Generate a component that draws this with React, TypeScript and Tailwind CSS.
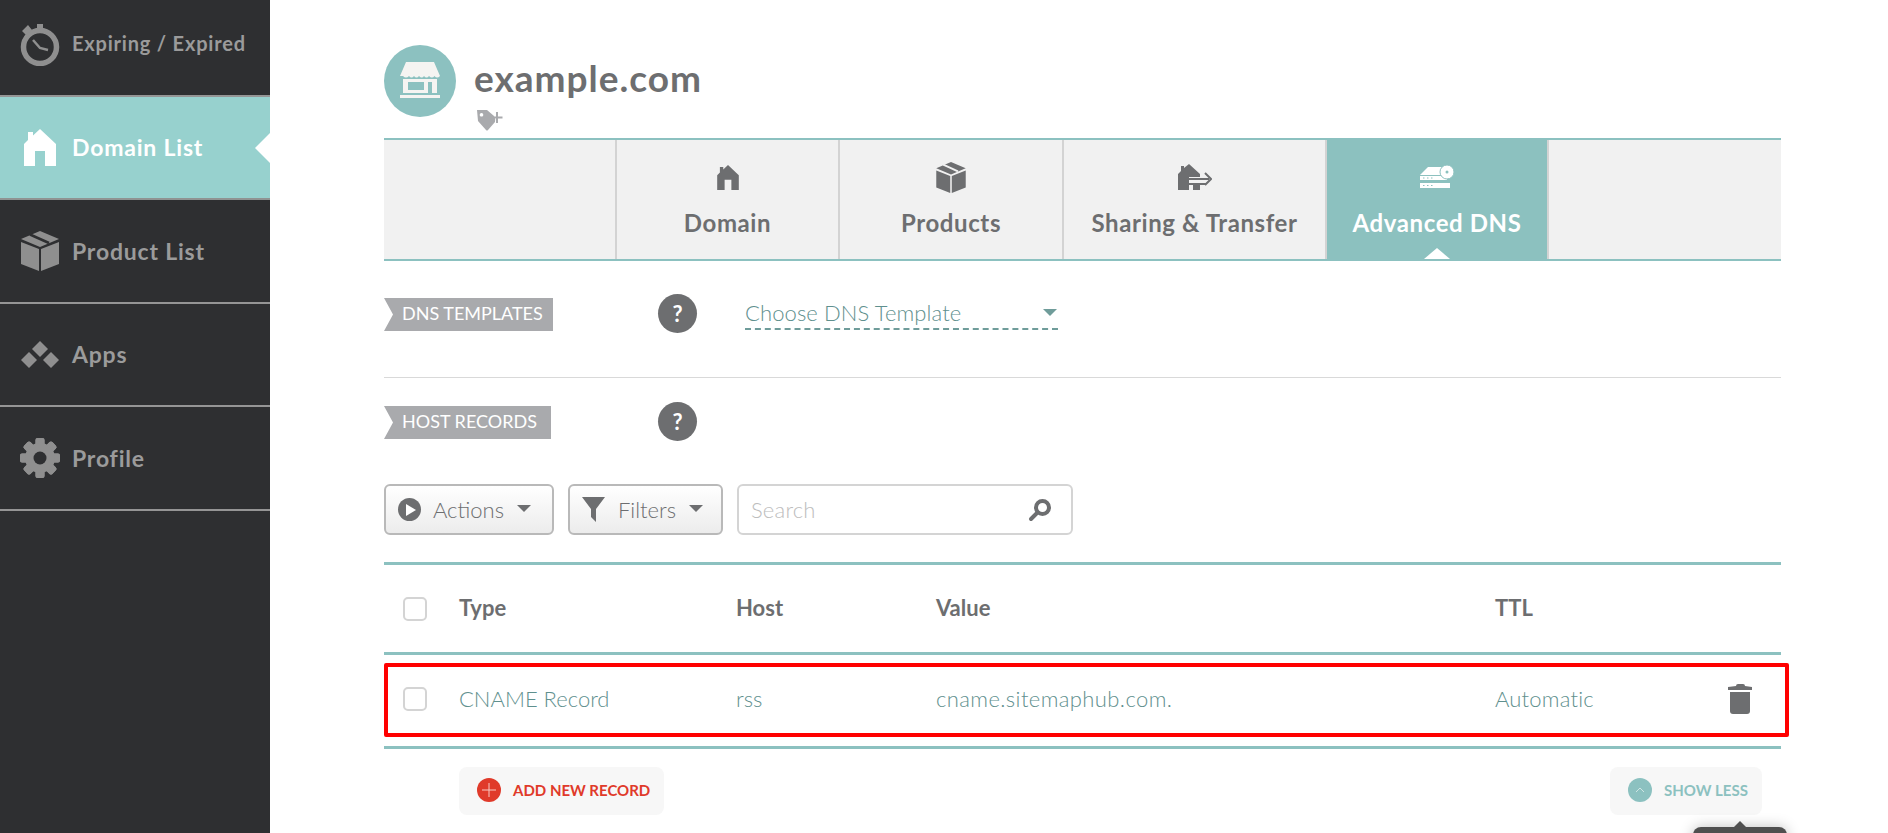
const font = { fontFamily: "Lato, 'Noto Sans', sans-serif" };

function House({ className }: { className?: string }) {
  return (
    <svg viewBox="0 0 32 37" className={className} fill="currentColor">
      <path d="M16 0 L32 15 V37 H21 V22 H11 V37 H0 V15 L4 11 V3 H9 V6.5 Z" />
    </svg>
  );
}
function Box({ className, gap = "#2e2f31" }: { className?: string; gap?: string }) {
  return (
    <svg viewBox="0 0 38 40" className={className} fill="currentColor">
      <path d="M0 11 L18 18 V40 L0 33 Z M20 18 L38 11 V33 L20 40 Z" />
      <path d="M19 0 L38 8 L19 16 L0 8 Z" />
      <path d="M9 3.500 L28 12" stroke={gap} strokeWidth="2.500" fill="none" />
    </svg>
  );
}
function Clock() {
  return (
    <svg viewBox="0 0 40 42" className="w-[40px] h-[42px]" fill="none" stroke="#8f8f8f">
      <circle cx="20" cy="23" r="16.500" strokeWidth="5.500" />
      <path d="M17 0 h6 v6 h-6 Z M2 7 L8 1 L12 6 L6 11 Z" fill="#8f8f8f" stroke="none" />
      <path d="M13 16 L20 24 L28 26" strokeWidth="2.500" />
    </svg>
  );
}
function Diamonds() {
  return (
    <svg viewBox="0 0 38 28" className="w-[38px] h-[28px]" fill="#8f8f8f">
      <path d="M19 0 L27 8 L19 16 L11 8 Z M8 11 L16 19 L8 27 L0 19 Z M30 11 L38 19 L30 27 L22 19 Z" />
    </svg>
  );
}
function Gear() {
  const teeth = [0, 45, 90, 135, 180, 225, 270, 315];
  return (
    <svg viewBox="0 0 40 40" className="w-[40px] h-[40px]" fill="#8f8f8f">
      {teeth.map((a) => (
        <rect key={a} x="15.500" y="0" width="9" height="40" rx="2" transform={`rotate(${a} 20 20)`} />
      ))}
      <circle cx="20" cy="20" r="15" />
      <circle cx="20" cy="20" r="6.500" fill="#2e2f31" />
    </svg>
  );
}
function Store() {
  return (
    <svg viewBox="0 0 40 38" className="w-[40px] h-[38px]" fill="#f5f4f2">
      <path d="M6 0 H34 L40 14 Q37 17 34.500 14 Q32 17 29 14 Q26.500 17 24 14 Q22 17 19 14 Q16.500 17 14 14 Q11.500 17 9 14 Q6 17 3 14 H0 Z" />
      <path fillRule="evenodd" d="M3 17 H37 V31 H3 Z M8 20 V28 H24 V20 Z M28 20 V31 H32 V20 Z" />
      <rect x="0" y="33" width="40" height="3" />
    </svg>
  );
}
function Tag() {
  return (
    <svg viewBox="0 0 26 21" className="w-[26px] h-[21px]">
      <path fillRule="evenodd" fill="#a9aaad" d="M0 0 H10 L17 6 Q19 9 18 12 L11 20 Q10 21 9 20 L1 11 Z M4.500 3 a1.800 1.800 0 1 0 0.010 0 Z" />
      <path d="M20 2 V13 M14.500 7.500 H25.500" stroke="#a9aaad" strokeWidth="2" />
    </svg>
  );
}
function Caret({ color = "#6d6e70" }: { color?: string }) {
  return (
    <svg viewBox="0 0 14 7" className="w-[14px] h-[7px]" fill={color}>
      <path d="M0 0 H14 L7 7 Z" />
    </svg>
  );
}
function HelpDot() {
  return (
    <div className="w-[39px] h-[39px] rounded-full bg-[#6d6e70] text-white flex items-center justify-center text-[22px] font-bold leading-none">
      ?
    </div>
  );
}
function Ribbon({ label, width }: { label: string; width: string }) {
  return (
    <div
      className={`${width} h-[33px] bg-[#a9aaad] text-white text-[18px] leading-[31px] pl-[18px] font-normal [clip-path:polygon(0_0,100%_0,100%_100%,0_100%,9px_50%)]`}
    >
      {label}
    </div>
  );
}
function Checkbox() {
  return <div className="w-[24px] h-[24px] rounded-[5px] border-2 border-[#d4d4d4] bg-white ml-[19px]" />;
}

function NavItem({
  label,
  icon,
  active,
  textClass,
  heightClass,
}: {
  label: string;
  icon: React.ReactNode;
  active?: boolean;
  textClass: string;
  heightClass: string;
}) {
  return (
    <div
      className={
        active
          ? `relative ${heightClass} bg-[#97d1ce] text-white border-b-2 border-[#8f9392] flex items-center`
          : `${heightClass} text-[#9b9b9b] border-b-2 border-[#959595] flex items-center`
      }
    >
      <div className="w-[72px] flex justify-end pr-[12px] shrink-0">
        <div className="w-[40px] flex justify-center">{icon}</div>
      </div>
      <span className={`${textClass} font-bold`}>{label}</span>
      {active && (
        <div className="absolute right-0 top-1/2 -translate-y-1/2 w-0 h-0 border-y-[15px] border-y-transparent border-r-[15px] border-r-white" />
      )}
    </div>
  );
}

function Tab({ label, icon, width, active }: { label: string; icon: React.ReactNode; width: string; active?: boolean }) {
  return (
    <div
      className={`${width} relative h-full flex flex-col items-center pt-[22px] border-r-2 ${
        active ? "bg-[#8cc1bf] text-white border-[#d3d3d3]" : "text-[#6d6e70] border-[#d3d3d3]"
      }`}
    >
      <div className="h-[30px] flex items-center justify-center">{icon}</div>
      <span className="text-[24px] tracking-[0.6px] font-bold mt-[16px] leading-[30px]">{label}</span>
      {active && (
        <div className="absolute bottom-0 left-1/2 -translate-x-1/2 w-0 h-0 border-x-[13px] border-x-transparent border-b-[11px] border-b-white" />
      )}
    </div>
  );
}

const grid = "grid grid-cols-[75px_277px_200px_559px_1fr] items-center";

export default function App() {
  return (
    <div style={font} className="flex h-[833px] w-[1888px] overflow-hidden bg-white">
      <aside className="w-[270px] shrink-0 bg-[#2e2f31] -mt-[6px]">
        <NavItem heightClass="h-[103px]" textClass="text-[20px] tracking-[0.8px] pb-[4px]" label="Expiring / Expired" icon={<Clock />} />
        <NavItem heightClass="h-[103px]" textClass="text-[23px] tracking-[0.8px]" active label="Domain List" icon={<House className="w-[32px] h-[37px]" />} />
        <NavItem heightClass="h-[104px]" textClass="text-[23px] tracking-[0.8px]" label="Product List" icon={<Box className="w-[38px] h-[40px] text-[#8f8f8f]" />} />
        <NavItem heightClass="h-[103px]" textClass="text-[23px] tracking-[0.8px]" label="Apps" icon={<Diamonds />} />
        <NavItem heightClass="h-[104px]" textClass="text-[23px] tracking-[0.8px]" label="Profile" icon={<Gear />} />
      </aside>

      <main className="w-[1397px] ml-[114px] relative shrink-0">
        <header className="h-[138px] pt-[45px] flex items-start">
          <div className="w-[72px] h-[72px] rounded-full bg-[#8cc1c0] flex items-center justify-center">
            <Store />
          </div>
          <div className="ml-[18px]">
            <h1 className="text-[37px] font-bold text-[#6d6e70] leading-[44px] mt-[11px] tracking-[1px]">example.com</h1>
            <div className="ml-[3px] mt-[10px]">
              <Tag />
            </div>
          </div>
        </header>

        <nav className="h-[123px] border-y-2 border-[#8cc1c0] bg-[#f1f1f1] flex">
          <div className="w-[233px] h-full border-r-2 border-[#d3d3d3]" />
          <Tab width="w-[223px]" label="Domain" icon={<House className="w-[22px] h-[25px]" />} />
          <Tab width="w-[224px]" label="Products" icon={<Box gap="#f1f1f1" className="w-[30px] h-[31px]" />} />
          <Tab
            width="w-[263px]"
            label="Sharing & Transfer"
            icon={
              <svg viewBox="0 0 34 26" className="w-[34px] h-[26px]" fill="currentColor">
                <path d="M11 0 L22 10 V13 H11 V26 H0 V10 L3 7 V2 H6 V4 Z" />
                <path d="M11 15 H31 M27 9 L33 15 L27 21 M11 20 H28" fill="none" stroke="currentColor" strokeWidth="2" />
                <rect x="15" y="21" width="7" height="5" />
              </svg>
            }
          />
          <Tab
            active
            width="w-[222px]"
            label="Advanced DNS"
            icon={
              <svg viewBox="0 0 34 24" className="w-[34px] h-[24px]" fill="currentColor">
                <path d="M0 10 L8 2 H22 L24 10 Z" />
                <path fillRule="evenodd" d="M0 11 H27 V15 H0 Z M3 12.500 v1 h1.500 v-1 Z M7 12.500 v1 h1.500 v-1 Z M11 12.500 v1 h1.500 v-1 Z" />
                <path fillRule="evenodd" d="M0 18 H30 V23 H0 Z M3 20 v1 h1.500 v-1 Z M7 20 v1 h1.500 v-1 Z M11 20 v1 h1.500 v-1 Z" />
                <circle cx="27" cy="7" r="7" stroke="#8cc1bf" strokeWidth="1" />
                <circle cx="27" cy="7" r="4.500" fill="none" stroke="currentColor" strokeWidth="3" strokeDasharray="2 1" />
                <circle cx="27" cy="7" r="1.500" fill="#8cc1bf" />
              </svg>
            }
          />
        </nav>

        <section className="h-[117px] border-b border-[#d9d9d9] pt-[37px] flex items-start">
          <Ribbon label="DNS TEMPLATES" width="w-[169px]" />
          <div className="ml-[105px] -mt-[4px]">
            <HelpDot />
          </div>
          <div className="ml-[48px] w-[313px] h-[33px] -mt-[1px] border-b-2 border-dashed border-[#6f9c9a] flex items-center justify-between pr-[1px]">
            <span className="text-[22px] tracking-[0.1px] font-light text-[#5f908e]">Choose DNS Template</span>
            <Caret color="#6f9c9a" />
          </div>
        </section>

        <section className="h-[77px] pt-[28px] flex items-start">
          <Ribbon label="HOST RECORDS" width="w-[167px]" />
          <div className="ml-[107px] -mt-[4px]">
            <HelpDot />
          </div>
        </section>

        <div className="flex gap-[14px] mt-[29px] h-[51px]">
          <button className="w-[170px] rounded-[6px] border-2 border-[#b9b9b9] bg-gradient-to-b from-white to-[#ececec] flex items-center pl-[12px] text-[22px] font-light text-[#6d6e70]">
            <span className="w-[23px] h-[23px] rounded-full bg-[#6d6e70] flex items-center justify-center mr-[12px]">
              <svg viewBox="0 0 10 12" className="w-[10px] h-[12px] ml-[2px]" fill="white"><path d="M0 0 L10 6 L0 12 Z" /></svg>
            </span>
            Actions
            <span className="ml-[13px] -mt-[3px]"><Caret /></span>
          </button>
          <button className="w-[155px] rounded-[6px] border-2 border-[#b9b9b9] bg-gradient-to-b from-white to-[#ececec] flex items-center pl-[12px] text-[22px] font-light text-[#6d6e70]">
            <svg viewBox="0 0 23 25" className="w-[23px] h-[25px] mr-[13px]" fill="#6d6e70"><path d="M0 0 H23 L14 12 V25 L9 20 V12 Z" /></svg>
            Filters
            <span className="ml-[13px] -mt-[3px]"><Caret /></span>
          </button>
          <div className="w-[336px] rounded-[6px] border-2 border-[#d4d4d4] bg-white flex items-center justify-between pl-[12px] pr-[19px] text-[22px] tracking-[0.2px] font-light text-[#bdbdbd]">
            Search
            <svg viewBox="0 0 24 24" className="w-[24px] h-[24px]" fill="none" stroke="#6d6e70">
              <circle cx="14.500" cy="9.500" r="6.500" strokeWidth="4" />
              <path d="M9 15 L3 21" strokeWidth="4" strokeLinecap="round" />
            </svg>
          </div>
        </div>

        <div className="mt-[27px] border-t-[3px] border-[#8cc1c0]">
          <div className={`${grid} h-[90px] border-b-[3px] border-[#8cc1c0] text-[22px] font-bold text-[#6d6e70]`}>
            <Checkbox />
            <span className="pb-[2px]">Type</span>
            <span className="pb-[2px]">Host</span>
            <span className="pb-[2px]">Value</span>
            <span className="pb-[2px]">TTL</span>
          </div>
          <div className={`${grid} relative h-[94px] pb-[4px] border-b-[3px] border-[#8cc1c0] text-[22px] font-light text-[#5f908e]`}>
            <Checkbox />
            <span>CNAME Record</span>
            <span>rss</span>
            <span className="tracking-[0.4px]">cname.sitemaphub.com.</span>
            <span className="flex justify-between items-center pr-[29px] tracking-[0.2px]">
              Automatic
              <svg viewBox="0 0 24 30" className="w-[24px] h-[30px]" fill="#6d6e70">
                <path d="M8 2 Q8 0 10 0 H15 Q17 0 17 2 L24 3 V6 H0 V3 Z" />
                <path d="M2 8 H22 V27 Q22 30 19 30 H5 Q2 30 2 27 Z" />
              </svg>
            </span>
            <div className="absolute left-0 -right-[8px] top-[8px] h-[74px] border-[4px] border-[#ff0000] rounded-[2px] pointer-events-none" />
          </div>
        </div>

        <div className="flex justify-between mt-[18px] pl-[75px] pr-[19px]">
          <div className="w-[205px] h-[48px] pb-[2px] rounded-[8px] bg-[#f7f7f7] flex items-center pl-[18px] text-[15px] font-bold text-[#e03a2a]">
            <svg viewBox="0 0 24 24" className="w-[24px] h-[24px] mr-[12px]">
              <circle cx="12" cy="12" r="12" fill="#e03a2a" />
              <path d="M12 5 V19 M5 12 H19" stroke="#f8c9c2" strokeWidth="1" />
            </svg>
            ADD NEW RECORD
          </div>
          <div className="w-[152px] h-[48px] pb-[2px] rounded-[8px] bg-[#f7f7f7] flex items-center pl-[18px] text-[15px] font-bold text-[#8cc1c0]">
            <svg viewBox="0 0 24 24" className="w-[24px] h-[24px] mr-[12px]">
              <circle cx="12" cy="12" r="12" fill="#8cc1c0" />
              <path d="M8 14 L12 10 L16 14" stroke="#cfe5e4" strokeWidth="1" fill="none" />
            </svg>
            SHOW LESS
          </div>
        </div>

        <div className="absolute left-[1309px] top-[827px] w-[94px] h-[30px] rounded-[8px] bg-[#4f4f4f] shadow-[0_0_14px_rgba(0,0,0,0.25)]">
          <div className="absolute left-1/2 -translate-x-1/2 -top-[6px] w-0 h-0 border-x-[6px] border-x-transparent border-b-[6px] border-b-[#4f4f4f]" />
        </div>
      </main>
    </div>
  );
}
